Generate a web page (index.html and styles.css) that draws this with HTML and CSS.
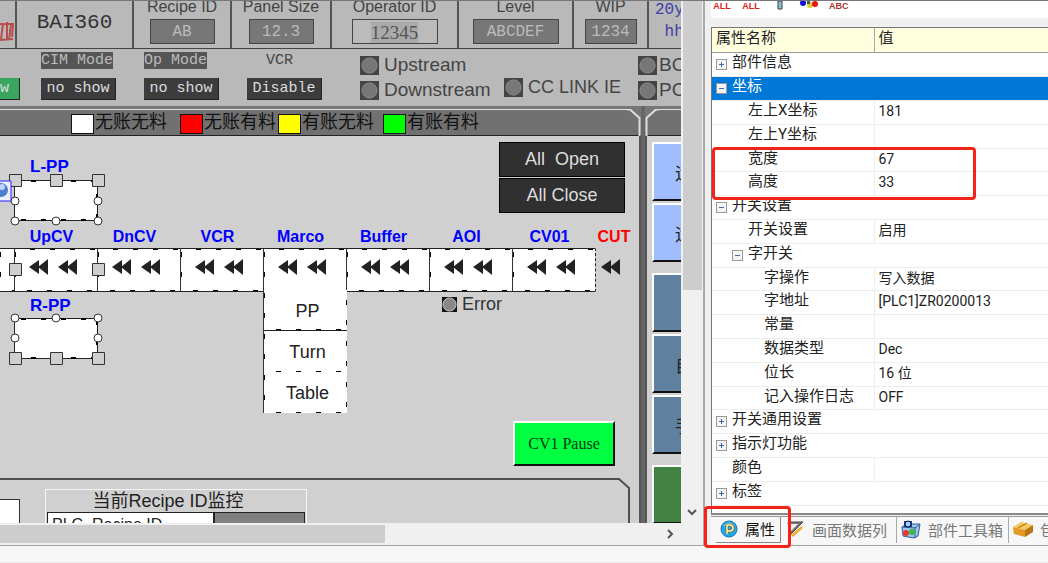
FILE: index.html
```html
<!DOCTYPE html>
<html lang="zh-CN">
<head>
    <meta charset="UTF-8">
    <meta name="viewport" content="width=device-width, initial-scale=1.0">
    <title>BAI360</title>
    <link rel="stylesheet" href="styles.css">
</head>
<body>
    <svg width="0" height="0" class="defs">
        <defs>
            <symbol id="rewind" viewBox="0 0 49 16">
                <path d="M0 8L10 1V15ZM9 8L19 0V16ZM29 8L39 1V15ZM38 8L48 0V16Z" fill="#222"/>
            </symbol>
            <symbol id="lamp" viewBox="0 0 20 20">
                <path d="M0 0H20V20H0Z" fill="#444"/>
                <circle cx="10" cy="10" r="8" fill="#777" stroke="#8c8c8c"/>
            </symbol>
            <g id="picked">
                <path d="M5.500 6.500H88.500V46.500H5.500Z" fill="#fff" stroke="#222"/>
                <path d="M22 7H88M12 46H88" stroke="#000" stroke-width="2" stroke-dasharray="5 15"/>
                <path d="M88 20V46M6 24V40" stroke="#000" stroke-width="2" stroke-dasharray="7 13"/>
                <g fill="#cfcfcf" stroke="#333">
                    <path d="M.5 .5H12.5V12.5H.5ZM41.500 .5H53.500V12.500H41.500ZM83.500 .5H95.500V12.500H83.500Z"/>
                </g>
                <g fill="#fff" stroke="#333">
                    <circle cx="6" cy="27" r="4"/>
                    <circle cx="89" cy="27" r="4"/>
                    <circle cx="6" cy="47" r="4"/>
                    <circle cx="47" cy="47" r="4"/>
                    <circle cx="89" cy="47" r="4"/>
                </g>
            </g>
        </defs>
    </svg>

    <div class="main">
        <div class="workspace">
            <div class="screen">
                <div class="head">
                    <div class="head-cell w-logo">
                        <svg class="logo" width="16" height="24" viewBox="0 0 16 24"><path d="M0 4H14M3 4L1 19M7 2V20M11 4L9 20M0 20L13 19M13 5L12 17" stroke="#b94f4c" stroke-width="2" fill="none"/></svg>
                    </div>
                    <div class="head-cell w-model"><div class="model">BAI360</div></div>
                    <div class="head-cell w-recipe"><span>Recipe ID</span><div class="field">AB</div></div>
                    <div class="head-cell w-panel"><span>Panel Size</span><div class="field">12.3</div></div>
                    <div class="head-cell w-operator"><span>Operator ID</span><div class="field wide light"><mark>12345</mark></div></div>
                    <div class="head-cell w-level"><span>Level</span><div class="field wide">ABCDEF</div></div>
                    <div class="head-cell w-wip"><span>WIP</span><div class="field narrow">1234</div></div>
                    <div class="head-cell clock"><div>20yy</div><div>&nbsp;hh</div></div>
                </div>

                <div class="modes">
                    <div class="mode first"><span>&nbsp;</span><button class="mode-button green" type="button">w</button></div>
                    <div class="mode"><span class="dark">CIM Mode</span><button class="mode-button" type="button">no show</button></div>
                    <div class="mode"><span class="dark">Op Mode</span><button class="mode-button" type="button">no show</button></div>
                    <div class="mode"><span class="center">VCR</span><button class="mode-button" type="button">Disable</button></div>
                    <div class="lamps">
                        <div class="lamp"><svg><use href="#lamp"/></svg>Upstream</div>
                        <div class="lamp"><svg><use href="#lamp"/></svg>Downstream</div>
                    </div>
                    <div class="lamps bottom">
                        <div class="lamp link"><svg><use href="#lamp"/></svg>CC LINK IE</div>
                    </div>
                    <div class="lamps tight">
                        <div class="lamp"><svg><use href="#lamp"/></svg>BC</div>
                        <div class="lamp"><svg><use href="#lamp"/></svg>PC</div>
                    </div>
                </div>

                <div class="work">
                    <div class="line-area">
                        <div class="legend">
                            <div class="legend-item"><i class="white"></i>无账无料</div>
                            <div class="legend-item"><i class="red"></i>无账有料</div>
                            <div class="legend-item"><i class="yellow"></i>有账无料</div>
                            <div class="legend-item"><i class="lime"></i>有账有料</div>
                            <svg class="corner" width="14" height="27" viewBox="0 0 14 27"><path d="M3 0H14V12L10 6Z" fill="#777"/><path d="M0 .5H3L12.500 9V27" fill="none" stroke="#ddd" stroke-width="2"/></svg>
                        </div>
                        <div class="canvas">
                            <div class="tag l-pp">L-PP</div>
                            <svg class="pick-l" width="96" height="53"><use href="#picked"/></svg>
                            <svg class="globe" width="12" height="22" viewBox="0 0 12 22"><path d="M0 1H11V21H0" fill="#eef" stroke="#22f"/><circle cx="1" cy="10" r="7" fill="#4d7fd0"/><circle cx="2" cy="7" r="3" fill="#bcd4ff"/></svg>

                            <div class="conveyor">
                                <div class="station stub"><span>&nbsp;</span><div class="cell"></div></div>
                                <div class="station"><span>UpCV</span><div class="cell"><svg><use href="#rewind"/></svg></div></div>
                                <div class="station"><span>DnCV</span><div class="cell"><svg><use href="#rewind"/></svg></div></div>
                                <div class="station"><span>VCR</span><div class="cell"><svg><use href="#rewind"/></svg></div></div>
                                <div class="station"><span>Marco</span><div class="cell"><svg><use href="#rewind"/></svg></div></div>
                                <div class="station"><span>Buffer</span><div class="cell"><svg><use href="#rewind"/></svg></div></div>
                                <div class="station"><span>AOI</span><div class="cell"><svg><use href="#rewind"/></svg></div></div>
                                <div class="station"><span>CV01</span><div class="cell"><svg><use href="#rewind"/></svg></div></div>
                                <div class="station cut"><span>CUT</span><div class="cell"><svg viewBox="0 0 20 16"><path d="M0 8L10 1V15ZM9 8L19 0V16Z" fill="#222"/></svg></div></div>
                            </div>
                            <svg class="pick-cv" width="96" height="13"><path d="M.5 .5H12.5V12.5H.5ZM83.500 .5H95.500V12.500H83.500Z" fill="#cfcfcf" stroke="#333"/></svg>

                            <div class="tag r-pp">R-PP</div>
                            <svg class="pick-r" width="96" height="53"><use href="#picked" transform="translate(0 53) scale(1 -1)"/></svg>

                            <div class="stack">
                                <div>PP</div>
                                <div>Turn</div>
                                <div>Table</div>
                            </div>

                            <div class="error"><svg width="15" height="15" viewBox="0 0 16 16"><path d="M0 0H16V16H0Z" fill="#111"/><circle cx="8" cy="8" r="7" fill="#888" stroke="#ccc"/></svg>Error</div>

                            <div class="all-buttons">
                                <button type="button">All&nbsp; Open</button>
                                <button type="button">All Close</button>
                            </div>
                            <button class="pause" type="button">CV1 Pause</button>

                            <svg class="bottom-frame" width="631" height="46" viewBox="0 0 631 46"><path d="M0 1H619L629 10V46" fill="none" stroke="#505050" stroke-width="2"/></svg>
                            <div class="blank-box"></div>
                            <div class="monitor">
                                <div class="monitor-title">当前Recipe ID监控</div>
                                <div class="monitor-row"><div class="monitor-name">PLC. Recipe ID</div><div class="monitor-value"></div></div>
                            </div>
                        </div>
                    </div>
                    <div class="divider"></div>
                    <div class="side">
                        <div class="side-head">
                            <svg class="corner" width="14" height="27" viewBox="0 0 14 27"><path d="M0 0H11L4 6L0 12Z" fill="#777"/><path d="M14 .5H11L1.500 9V27" fill="none" stroke="#ddd" stroke-width="2"/></svg>
                        </div>
                        <div class="keys">
                            <button class="key blue" type="button">运</button>
                            <button class="key blue" type="button">运</button>
                            <button class="key steel spaced" type="button"></button>
                            <button class="key steel" type="button">自</button>
                            <button class="key steel" type="button">手</button>
                            <button class="key dark-green spaced" type="button"></button>
                        </div>
                    </div>
                </div>
            </div>
            <div class="v-scroll">
                <div class="v-thumb"></div>
                <svg width="12" height="8" viewBox="0 0 12 8"><path d="M2 1L6 5L10 1" fill="none" stroke="#555" stroke-width="2"/></svg>
            </div>
            <div class="h-scroll">
                <div class="h-thumb"></div>
                <svg width="8" height="12" viewBox="0 0 8 12"><path d="M1 2L5 6L1 10" fill="none" stroke="#555" stroke-width="2"/></svg>
            </div>
        </div>

        <div class="properties">
            <div class="toolbar">
                <button type="button" class="red-text">ALL</button>
                <button type="button" class="red-text">ALL</button>
                <button type="button" aria-label="column"><svg width="18" height="10" viewBox="0 0 18 10"><path d="M7 0H11V8H7Z" fill="#8fc0d0" stroke="#345"/></svg></button>
                <button type="button" aria-label="color"><svg width="18" height="10" viewBox="0 0 18 10"><circle cx="3" cy="2" r="3" fill="#11d"/><circle cx="10" cy="4" r="3" fill="#dc3"/><circle cx="15" cy="3" r="3" fill="#e11"/><path d="M7 0H10V3H7Z" fill="#555"/></svg></button>
                <button type="button" class="abc">ABC</button>
            </div>

            <div class="grid">
                <table>
                    <thead>
                        <tr><th>属性名称</th><th>值</th></tr>
                    </thead>
                    <tbody>
                        <tr class="group"><td colspan="2"><button class="toggle plus" type="button" aria-label="+"></button>部件信息</td></tr>
                        <tr class="group selected"><td colspan="2"><button class="toggle" type="button" aria-label="-"></button>坐标</td></tr>
                        <tr><td class="in1">左上X坐标</td><td>181</td></tr>
                        <tr><td class="in1">左上Y坐标</td><td></td></tr>
                        <tr><td class="in1">宽度</td><td>67</td></tr>
                        <tr><td class="in1">高度</td><td>33</td></tr>
                        <tr class="group"><td colspan="2"><button class="toggle" type="button" aria-label="-"></button>开关设置</td></tr>
                        <tr><td class="in1">开关设置</td><td>启用</td></tr>
                        <tr class="group sub"><td colspan="2"><button class="toggle" type="button" aria-label="-"></button>字开关</td></tr>
                        <tr><td class="in2">字操作</td><td>写入数据</td></tr>
                        <tr><td class="in2">字地址</td><td>[PLC1]ZR0200013</td></tr>
                        <tr><td class="in2">常量</td><td></td></tr>
                        <tr><td class="in2">数据类型</td><td>Dec</td></tr>
                        <tr><td class="in2">位长</td><td>16 位</td></tr>
                        <tr><td class="in2">记入操作日志</td><td>OFF</td></tr>
                        <tr class="group"><td colspan="2"><button class="toggle plus" type="button" aria-label="+"></button>开关通用设置</td></tr>
                        <tr class="group"><td colspan="2"><button class="toggle plus" type="button" aria-label="+"></button>指示灯功能</td></tr>
                        <tr><td class="in0">颜色</td><td></td></tr>
                        <tr class="group"><td colspan="2"><button class="toggle plus" type="button" aria-label="+"></button>标签</td></tr>
                    </tbody>
                </table>
                <div class="size-mark"></div>
            </div>

            <div class="tabs">
                <button class="tab active" type="button">
                    <svg width="18" height="18" viewBox="0 0 18 18"><circle cx="9" cy="9" r="8" fill="#21a9ea" stroke="#1478be"/><path d="M3 6Q9 -1 15 6Q9 4 3 6Z" fill="#9be3ff"/><path d="M7 14V5H10Q13 5 13 8T10 11H7" fill="none" stroke="#7a6a35" stroke-width="3"/><path d="M7 14V5H10Q13 5 13 8T10 11H7" fill="none" stroke="#fff3b0" stroke-width="1.500"/></svg>
                    属性
                </button>
                <button class="tab" type="button">
                    <svg width="18" height="18" viewBox="0 0 18 18"><path d="M1 2H16L3 15Z" fill="#777" stroke="#444"/><path d="M4 4H11L4 11Z" fill="#eee"/><path d="M15 7L5 16" stroke="#f0b030" stroke-width="3"/></svg>
                    画面数据列
                </button>
                <button class="tab line" type="button">
                    <svg width="20" height="20" viewBox="0 0 20 20"><path d="M1 8L6 5H19L17 17L13 19L2 17Z" fill="#9fc6e8" stroke="#2b5f9a"/><path d="M14 8V19M1 8L14 9L19 5" stroke="#2b5f9a" fill="none"/><path d="M3 2H11V8H3Z" fill="#1737b8"/><circle cx="7" cy="5" r="3" fill="#9cf" stroke="#012"/><circle cx="5" cy="14" r="3" fill="#e33"/><circle cx="11" cy="13" r="3" fill="#3b4"/></svg>
                    部件工具箱
                </button>
                <button class="tab line" type="button">
                    <svg width="20" height="18" viewBox="0 0 20 18"><path d="M0 7L8 2L20 5L12 10Z" fill="#f6c85c"/><path d="M0 7L12 10V17L1 14Z" fill="#e39a25"/><path d="M12 10L20 5V12L12 17Z" fill="#b87413"/><path d="M5 8L14 3" stroke="#a4680f"/></svg>
                    包
                </button>
                <div class="tab-mark"></div>
            </div>
        </div>
    </div>
    <div class="status"></div>
</body>
</html>
```

FILE: styles.css
```css
* {
    box-sizing: border-box;
}

body {
    margin: 0;
    height: 100vh;
    display: flex;
    flex-direction: column;
    border-top: 1px solid #777;
    background: #f0f0f0;
    font-family: "Liberation Sans", "Noto Sans CJK SC", sans-serif;
    overflow: hidden;
}

button {
    margin: 0;
    padding: 0;
    border-style: none;
    font: inherit;
    cursor: pointer;
}

svg {
    display: block;
    flex: none;
}

.defs {
    position: absolute;
}

.main {
    flex: 1;
    min-height: 0;
    display: flex;
}

.status {
    height: 18px;
    border-top: 1px solid #a0a0a0;
    border-bottom: 1px solid #eaeaea;
    background: #f7f7f7;
}

/* workspace */
.workspace {
    flex: 1;
    min-width: 0;
    display: grid;
    grid-template-columns: minmax(0, 1fr) 22px;
    grid-template-rows: minmax(0, 1fr) 22px;
    border-right: 2px solid #aaa;
}

.screen {
    display: flex;
    flex-direction: column;
    background: #d0d0d0;
    overflow: hidden;
}

.v-scroll {
    display: flex;
    flex-direction: column;
    justify-content: space-between;
    align-items: center;
    padding-bottom: 6px;
}

.v-thumb {
    width: 19px;
    height: 56%;
    background: #cdcdcd;
}

.h-scroll {
    grid-column: 1 / 3;
    display: flex;
    justify-content: space-between;
    align-items: center;
    padding-right: 28px;
}

.h-thumb {
    width: 57%;
    height: 18px;
    background: #cdcdcd;
}

/* header */
.head {
    display: flex;
    height: 48px;
    flex: none;
    background: #b9b9b9;
    border-bottom: 1px solid #444;
    color: #444;
    font-size: 16px;
    line-height: 20px;
}

.head-cell {
    flex: none;
    display: flex;
    flex-direction: column;
    justify-content: flex-end;
    align-items: center;
    gap: 2px;
    padding-bottom: 4px;
    border-right: 2px solid #555;
    white-space: nowrap;
    overflow: hidden;
}

.w-logo { width: 17px; }
.w-model { width: 117px; }
.w-recipe { width: 98px; }
.w-panel { width: 100px; }
.w-operator { width: 127px; }
.w-level { width: 115px; }
.w-wip { width: 75px; }

.model {
    flex: 1;
    display: flex;
    align-items: center;
    color: #333;
    font-family: "Liberation Mono", monospace;
    font-size: 21px;
}

.field {
    width: 65px;
    height: 25px;
    border: 1px solid #444;
    background: #777;
    color: #bbb;
    font-family: "Liberation Mono", monospace;
    line-height: 25px;
    text-align: center;
}

.field.wide {
    width: 86px;
}

.field.narrow {
    width: 52px;
}

.field.light {
    background: #bbb;
}

.field mark {
    background: #aaa;
    color: #555;
    font-family: "Liberation Serif", serif;
    font-size: 19px;
}

.head .clock {
    flex: 1;
    align-items: flex-start;
    padding-left: 6px;
    padding-bottom: 6px;
    border-right: none;
    color: #4040a8;
    font-family: "Liberation Mono", monospace;
}

/* modes */
.modes {
    flex: none;
    display: grid;
    grid-template-columns: 41px 103px 103px 113px 144px 134px 1fr;
    height: 57px;
    background: #b9b9b9;
}

.mode {
    display: flex;
    flex-direction: column;
    align-items: flex-start;
    gap: 9px;
    padding-top: 3px;
    color: #444;
    font-family: "Liberation Mono", monospace;
    font-size: 15px;
    line-height: 17px;
}

.mode .dark {
    background: #555;
    color: #bbb;
}

.mode .center {
    width: 65px;
    text-align: center;
}

.mode-button {
    width: 75px;
    height: 22px;
    background: #3c3c3c;
    border-right: 1px solid #222;
    border-bottom: 1px solid #222;
    color: #ddd;
}

.mode-button.green {
    width: 20px;
    padding-right: 11px;
    background: #3aa55f;
}

.lamps {
    display: flex;
    flex-direction: column;
    gap: 5px;
    padding-top: 6px;
}

.lamps.bottom {
    justify-content: flex-end;
    padding-bottom: 9px;
}

.lamp {
    display: flex;
    align-items: center;
    gap: 5px;
    color: #444;
    font-size: 19px;
    line-height: 20px;
    white-space: nowrap;
}

.tight .lamp {
    gap: 2px;
}

.lamp svg {
    width: 19px;
    height: 19px;
}

.lamp.link {
    font-size: 18px;
}

/* line view */
.work {
    flex: 1;
    min-height: 0;
    display: flex;
}

.line-area {
    flex: 1;
    min-width: 0;
    display: flex;
    flex-direction: column;
}

.legend,
.side-head {
    position: relative;
    flex: none;
    height: 30px;
    border-top: 3px solid #777;
    border-bottom: 1px solid #222;
    background: #717171;
    box-shadow: inset 0 1px #ddd;
}

.legend {
    display: grid;
    grid-template-columns: 109px 98px 105px 1fr;
    padding-left: 71px;
}

.legend .corner {
    position: absolute;
    top: 0;
    right: 0;
}

.side-head .corner {
    position: absolute;
    top: 0;
    left: 0;
}

.legend-item {
    display: flex;
    align-items: center;
    gap: 1px;
    color: #111;
    font-size: 18px;
    line-height: 24px;
    white-space: nowrap;
}

.legend-item i {
    width: 23px;
    height: 20px;
    border: 1px solid #111;
    margin-top: 4px;
}

.white { background: #fff; }
.red { background: #f00; }
.yellow { background: #ff0; }
.lime { background: #0f0; }

.divider {
    width: 4px;
    background: #666;
}

.side {
    width: 36px;
    display: flex;
    flex-direction: column;
    overflow: hidden;
}

.keys {
    flex: 1;
    min-height: 0;
    display: flex;
    flex-direction: column;
    gap: 2px;
    padding: 6px 0 0 5px;
    border-left: 2px solid #555;
    overflow: hidden;
}

.key {
    flex: none;
    height: 59px;
    padding-left: 21px;
    border-top: 2px solid #fff;
    border-left: 2px solid #fff;
    border-bottom: 2px solid #111;
    color: #222;
    font-size: 18px;
    text-align: left;
    white-space: nowrap;
    overflow: hidden;
}

.blue { background: #a0beff; }
.steel { background: #6080a0; }
.dark-green { background: #418141; }

.key.spaced {
    margin-top: 9px;
}

/* placed objects */
.canvas {
    position: relative;
    flex: 1;
    min-height: 0;
    border-right: 2px solid #555;
    overflow: hidden;
}

.tag {
    position: absolute;
    left: 30px;
    color: #00f;
    font-size: 17px;
    font-weight: bold;
    line-height: 20px;
}

.l-pp { top: 21px; }
.r-pp { top: 160px; }

.pick-l,
.pick-r,
.pick-cv {
    position: absolute;
    left: 9px;
    overflow: visible;
}

.pick-l { top: 38px; }
.pick-r { top: 176px; }
.pick-cv { top: 127px; }

.globe {
    position: absolute;
    top: 44px;
    left: 0;
}

.conveyor {
    position: absolute;
    top: 90px;
    left: 0;
    display: flex;
}

.station {
    width: 83px;
}

.station span {
    display: block;
    height: 22px;
    padding-right: 8px;
    color: #00f;
    font-size: 16px;
    font-weight: bold;
    line-height: 22px;
    text-align: center;
}

.cell {
    height: 44px;
    padding: 10px 0 0 14px;
    border-top: 1px solid #222;
    border-bottom: 1px solid #222;
    border-left: 1px solid #333;
    background:
        repeating-linear-gradient(90deg, transparent 0 15px, #000 15px 20px) 0 0 / 100% 1px no-repeat,
        repeating-linear-gradient(90deg, transparent 0 12px, #000 12px 17px, transparent 17px 20px) 0 100% / 100% 1px no-repeat,
        repeating-linear-gradient(transparent 0 3px, #000 3px 8px, transparent 8px 20px) 0 0 / 1px 100% no-repeat,
        #fff;
}

.cell svg {
    width: 49px;
    height: 16px;
}

.stub {
    width: 14px;
}

.stub .cell {
    padding: 0;
    border-left: none;
}

.cut span {
    width: 38px;
    padding: 0;
    color: #f00;
}

.cut .cell {
    padding-left: 5px;
    border-color: transparent;
    border-left: 1px dashed #222;
    background: none;
}

.cut .cell svg {
    width: 20px;
}

.stack {
    position: absolute;
    top: 154px;
    left: 263px;
    width: 84px;
}

.stack div {
    height: 41px;
    padding-left: 4px;
    border-left: 1px solid #333;
    background:
        repeating-linear-gradient(90deg, transparent 0 12px, #000 12px 17px, transparent 17px 20px) 0 100% / 100% 1px no-repeat,
        repeating-linear-gradient(transparent 0 10px, #000 10px 15px, transparent 15px 20px) 100% 0 / 1px 100% no-repeat,
        repeating-linear-gradient(transparent 0 3px, #000 3px 8px, transparent 8px 20px) 0 0 / 1px 100% no-repeat,
        #fff;
    color: #222;
    font-size: 18px;
    line-height: 43px;
    text-align: center;
}

.stack div:first-child {
    border-bottom: 1px solid #222;
}

.error {
    position: absolute;
    top: 158px;
    left: 442px;
    display: flex;
    align-items: center;
    gap: 5px;
    color: #333;
    font-size: 18px;
    line-height: 20px;
}

.all-buttons {
    position: absolute;
    top: 6px;
    right: 14px;
    width: 126px;
    display: flex;
    flex-direction: column;
    gap: 1px;
}

.all-buttons button {
    height: 35px;
    border: 1px solid #000;
    background: #303030;
    color: #ddd;
    font-size: 18px;
}

.pause {
    position: absolute;
    top: 285px;
    right: 24px;
    width: 102px;
    height: 45px;
    border: 2px solid #fff;
    border-right-color: #111;
    border-bottom-color: #111;
    background: #00ff40;
    color: #053a10;
    font-family: "Liberation Serif", serif;
    font-size: 16px;
}

.bottom-frame {
    position: absolute;
    top: 342px;
    left: 0;
}

.blank-box {
    position: absolute;
    top: 363px;
    left: 0;
    width: 20px;
    height: 40px;
    border: 1px solid #333;
    border-left: none;
    background: #fff;
}

.monitor {
    position: absolute;
    top: 353px;
    left: 45px;
    width: 262px;
    height: 50px;
    border: 1px solid #f4f4f4;
}

.monitor-title {
    padding-right: 16px;
    color: #222;
    font-size: 18px;
    line-height: 22px;
    text-align: center;
}

.monitor-row {
    display: flex;
    padding: 0 1px;
}

.monitor-name {
    width: 167px;
    height: 30px;
    padding-left: 4px;
    border: 1px solid #222;
    background: #fff;
    color: #222;
    font-size: 16px;
    line-height: 24px;
}

.monitor-value {
    flex: 1;
    border: 1px solid #222;
    background: #808080;
}

/* properties */
.properties {
    width: 343px;
    display: flex;
    flex-direction: column;
    padding-left: 6px;
    background: #f0f0f0;
}

.toolbar {
    flex: none;
    display: flex;
    gap: 11px;
    height: 17px;
    padding-left: 2px;
    background: #fff;
}

.toolbar button {
    width: 18px;
    height: 10px;
    background: none;
    line-height: 10px;
    font-size: 9px;
    font-weight: bold;
}

.toolbar .red-text {
    color: #d22;
}

.toolbar .abc {
    color: #a33;
}

.grid {
    position: relative;
    flex: 1;
    min-height: 0;
    margin-top: 9px;
    border-top: 1px solid #777;
    border-left: 1px solid #777;
    border-bottom: 2px solid #888;
    background: #fff;
}

table {
    width: 100%;
    border-collapse: collapse;
    table-layout: fixed;
    color: #222;
    font-family: Roboto, "Noto Sans CJK SC", sans-serif;
    font-size: 15px;
    line-height: 20px;
}

th,
td {
    padding: 0 4px 3px;
    border-bottom: 1px solid #eee;
    text-align: left;
    white-space: nowrap;
    overflow: hidden;
}

th {
    border-bottom: 1px solid #999;
    background: #ffffdf;
    font-weight: normal;
}

th:first-child {
    width: 162px;
    border-right: 1px solid #aaa;
}

tr {
    height: 24px;
}

tbody tr:nth-child(5n) {
    height: 23px;
}

td {
    line-height: 19px;
}

td:first-child:not([colspan]) {
    border-right: 1px solid #eee;
}

td:nth-child(2) {
    padding-bottom: 1px;
    font-size: 14px;
}

.in0 { padding-left: 20px; }
.in1 { padding-left: 36px; }
.in2 { padding-left: 52px; }

.sub td {
    padding-left: 20px;
}

.selected td {
    background: #0078d7;
    color: #fff;
}

.toggle {
    width: 11px;
    height: 11px;
    margin-right: 5px;
    border: 1px solid #999;
    background: linear-gradient(#4466b0, #4466b0) center / 5px 1px no-repeat, #f4f4f4;
    vertical-align: -2px;
}

.toggle.plus {
    background:
        linear-gradient(#4466b0, #4466b0) center / 5px 1px no-repeat,
        linear-gradient(#4466b0, #4466b0) center / 1px 5px no-repeat,
        #f4f4f4;
}

.size-mark,
.tab-mark {
    position: absolute;
    border: 3px solid #f42318;
    border-radius: 4px;
    pointer-events: none;
}

.size-mark {
    top: 119px;
    left: 0;
    width: 264px;
    height: 53px;
}

.tabs {
    position: relative;
    flex: none;
    display: flex;
    height: 29px;
    margin-top: 1px;
    border-top: 1px solid #999;
    background: #f7f7f7;
    font-size: 15px;
}

.tab {
    flex: none;
    display: flex;
    align-items: center;
    gap: 7px;
    height: 26px;
    padding: 0 9px 2px 6px;
    background: none;
    color: #777;
    white-space: nowrap;
}

.tab.active {
    margin-left: 5px;
    padding: 0 5px 2px 4px;
    border-right: 1px solid #888;
    border-bottom: 1px solid #888;
    color: #111;
}

.tab.line {
    padding: 0 5px 2px 4px;
    border-left: 1px solid #aaa;
}

.tab-mark {
    top: -11px;
    left: -7px;
    width: 87px;
    height: 42px;
}
```
